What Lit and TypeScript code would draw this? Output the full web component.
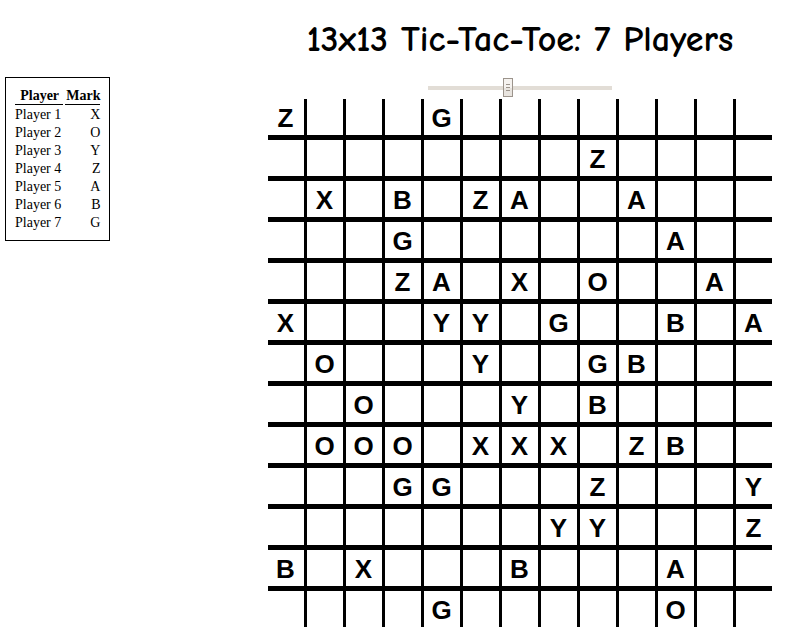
import { LitElement, html, css } from "lit";
import { customElement, property, state } from "lit/decorators.js";

const MARKS = ["X", "O", "Y", "Z", "A", "B", "G"];

const START = [
  "Z...G........",
  "........Z....",
  ".X.B.ZA..A...",
  "...G......A..",
  "...ZA.X.O..A.",
  "X...YY.G..B.A",
  ".O...Y..GB...",
  "..O...Y.B....",
  ".OOO.XXX.ZB..",
  "...GG...Z...Y",
  ".......YY...Z",
  "B.X...B...A..",
  "....G.....O..",
];

@customElement("player-list")
class PlayerList extends LitElement {
  @property({ attribute: false }) marks: string[] = [];

  static styles = css`
    :host {
      display: block;
    }
    .players {
      border: 1px solid #000;
      padding: 7px;
      border-spacing: 2px;
      font: 14px/16px "Liberation Serif", "Times New Roman", serif;
    }
    th,
    td {
      padding: 0 0 0 1px;
      text-align: right;
    }
    th {
      padding-top: 1px;
      border-bottom: 1px solid #000;
      text-align: center;
    }
    .name {
      padding: 0 2px 0 0;
      text-align: left;
    }
  `;

  render() {
    return html`<table class="players">
      <thead>
        <tr><th scope="col">Player</th><th scope="col">Mark</th></tr>
      </thead>
      <tbody>
        ${this.marks.map(
          (mark, i) => html`<tr><td class="name">Player ${i + 1}</td><td>${mark}</td></tr>`
        )}
      </tbody>
    </table>`;
  }
}

@customElement("game-board")
class GameBoard extends LitElement {
  @property({ attribute: false }) rows: string[] = [];

  static styles = css`
    :host {
      display: block;
    }
    .board {
      display: grid;
      grid-template-columns: repeat(13, 36px);
      grid-auto-rows: 36px;
      gap: 5px 3px;
      background: #000;
    }
    .cell {
      border: 0;
      margin: 0;
      padding: 2px 1px 0 0;
      background: #fff;
      color: #000;
      font: bold 26px/34px "Liberation Sans", Arial, sans-serif;
      text-align: center;
    }
  `;

  render() {
    return html`<div class="board">
      ${this.rows.map((row, r) =>
        [...row].map((c, i) => {
          const mark = c === "." ? "" : c;
          return html`<button
            class="cell"
            type="button"
            aria-label="Row ${r + 1}, column ${i + 1} ${mark}"
          >${mark}</button>`;
        })
      )}
    </div>`;
  }
}

@customElement("app-root")
class AppRoot extends LitElement {
  @state() private players = 7;

  static styles = css`
    :host {
      display: grid;
      grid-template-columns: 242px 1fr;
      min-height: 100vh;
      background: #fff;
      color: #000;
    }
    .side {
      padding: 77px 5px 0;
      justify-self: start;
    }
    .game {
      display: flex;
      flex-direction: column;
      align-items: center;
      padding: 16px 8px;
    }
    .title {
      margin: 0 0 14px;
      font: bold 36px/48px "Comic Sans MS", "Comic Neue", "Noto Sans", sans-serif;
      white-space: nowrap;
    }
    .size {
      appearance: none;
      width: 184px;
      height: 19px;
      margin: 0 0 2px;
      background: linear-gradient(#e2ddd6, #e2ddd6) center / 100% 4px no-repeat;
    }
    .size::-webkit-slider-thumb {
      appearance: none;
      box-sizing: border-box;
      width: 10px;
      height: 19px;
      border: 1px solid #9c948c;
      background:
        linear-gradient(#9c948c, #9c948c) 2px 5px / 4px 1px no-repeat,
        linear-gradient(#9c948c, #9c948c) 2px 8px / 4px 1px no-repeat,
        linear-gradient(#9c948c, #9c948c) 2px 11px / 4px 1px no-repeat,
        linear-gradient(#f5f2ef 50%, #e8e4df 50%);
    }
  `;

  render() {
    return html`
      <aside class="side">
        <player-list .marks=${MARKS.slice(0, this.players)}></player-list>
      </aside>
      <main class="game">
        <h1 class="title">13x13 Tic-Tac-Toe: ${this.players} Players</h1>
        <input class="size" type="range" min="1" max="15" value="7" aria-label="Game size" />
        <game-board .rows=${START}></game-board>
      </main>
    `;
  }
}
